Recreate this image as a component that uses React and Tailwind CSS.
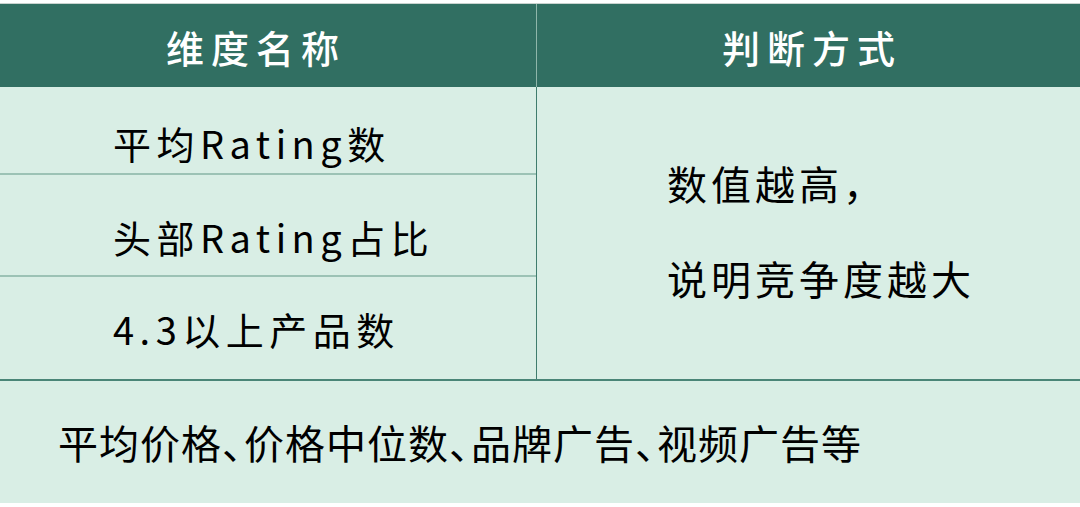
const font = { fontFamily: '"Noto Sans CJK SC", "Noto Sans", sans-serif' }

// half-width enumeration comma, like the reference's tight 、
function Dun() {
  return <span className="[font-feature-settings:'halt'] tracking-[2px]">、</span>
}

export default function App() {
  return (
    <div className="w-[1080px] h-[507px] bg-white pt-[3px]" style={font}>
      <div className="grid grid-cols-[537px_1fr] bg-[#d9eee5] border-t border-[#c9d3cf]">
        {/* header */}
        <div className="h-[83px] bg-[#316f62] border-r border-[#8fb6aa] pl-[166px] pt-[24px] text-white text-[38px] leading-[38px] font-medium tracking-[7px]">
          维度名称
        </div>
        <div className="h-[83px] bg-[#316f62] pl-[185px] pt-[24px] text-white text-[38px] leading-[38px] font-medium tracking-[7px]">
          判断方式
        </div>

        {/* left column rows */}
        <div className="flex flex-col border-r border-[#3f7c6d] text-[38px] leading-[38px] text-black tracking-[5.5px]">
          <div className="h-[88px] pl-[113px] pt-[37px] border-b-2 border-[#9cc2b5]">平均Rating数</div>
          <div className="h-[102px] pl-[113px] pt-[43px] border-b-2 border-[#9cc2b5]">头部Rating占比</div>
          <div className="h-[102px] pl-[113px] pt-[33px]">4.3以上产品数</div>
        </div>
        <div className="flex flex-col pl-[130px] pt-[76px] gap-[55px] text-[40px] leading-[40px] text-black tracking-[4px]">
          <div>数值越高，</div>
          <div>说明竞争度越大</div>
        </div>

        {/* footer */}
        <div className="col-span-2 h-[124px] border-t-2 border-[#4a8577] pl-[58px] pt-[41px] text-[40px] leading-[40px] text-black tracking-[1px]">
          平均价格<Dun />价格中位数<Dun />品牌广告<Dun />视频广告等
        </div>
      </div>
    </div>
  )
}
